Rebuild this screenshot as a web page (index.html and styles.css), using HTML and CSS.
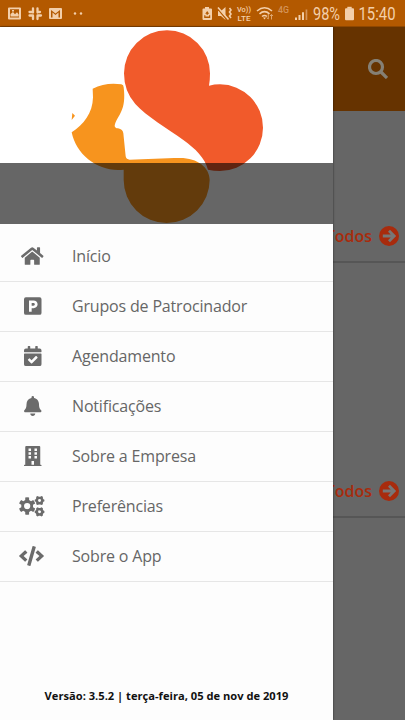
FILE: index.html
```
<!DOCTYPE html>
<html lang="pt-BR">
<head>
<meta charset="utf-8">
<title>Menu</title>
<link rel="stylesheet" href="styles.css">
</head>
<body>
<div class="app">
  <header class="status">
    <svg class="status-art" viewBox="0 0 405 27" aria-hidden="true">
      <g fill="#f3cfaa">
        <path fill-rule="evenodd" d="M9 7.500h11q1 0 1 1v10q0 1-1 1H9q-1 0-1-1v-10q0-1 1-1zM10 9.200v8.400h9V9.200zM10.500 16.500V14l2.500-2 2 2.200 2-2 1.700 2.300v2zM12 10h2v1.500h-2z"/>
        <path d="M33 8.500v4M29.500 12h3.500M37.500 8.500v4M33 16v3M37.500 15.500h3.500M37.500 16v3M29.500 15.500h3.500M37.500 12h2.500" stroke="#f3cfaa" stroke-width="2.300" stroke-linecap="round"/>
        <path fill-rule="evenodd" d="M50 8h11q1 0 1 1v9q0 1-1 1H50q-1 0-1-1V9q0-1 1-1zm1 2v7.500h1.500v-5l3 2.500 3-2.500v5H60V10l-4.500 3.600z"/>
        <circle cx="75" cy="13.500" r="1.200"/><circle cx="81" cy="13.500" r="1.200"/>
        <path fill-rule="evenodd" d="M205 7h4v1.500h2q1 0 1 1V19q0 1-1 1h-7.500q-1 0-1-1V9.500q0-1 1-1H205zm2.200 4-2 2.700h1.300v1h1.400v-1h1.300zm-3 4.200v2.800h6v-2.800h-1.200v1.300h-3.600v-1.300z"/>
        <path d="M218 11h3l4.500-4v13l-4.500-4h-3z"/>
        <rect x="345" y="8.300" width="9" height="12" rx="1"/><rect x="347.300" y="6.800" width="4.400" height="2"/>
        <path d="M295 17.500h2V20h-2zM298.500 15h2v5h-2zM302 12.300h2V20h-2z"/>
      </g>
      <path d="M217.500 8.500l10 12" stroke="#b35900" stroke-width="1.500"/>
      <path d="M218 7.500l10.500 12M229.500 8l1.500 2-1.500 2 1.500 2-1.500 2 1.500 2" fill="none" stroke="#f3cfaa" stroke-width="1.600"/>
      <g fill="none" stroke="#f3cfaa" stroke-width="1.600"><path d="M257 11q7.500-6.500 15 0M259.500 13.800q5-4.300 10 0M262 16.500q2.500-2 5 0"/></g>
      <path d="M263 17.500h3l-1.500 2z" fill="#f3cfaa"/>
      <path d="M268.300 14v5M266.800 17.500l1.500 1.700M271.500 19.500v-5M270 16l1.500-1.600 1.500 1.600" fill="none" stroke="#dda56d"/>
      <path d="M305.600 9.500h1.700V20h-1.700z" fill="#d49459"/>
      <g fill="#f3cfaa" font-family="Roboto, sans-serif">
        <text x="237" y="12.400" font-size="7.300" font-weight="500" textLength="14" lengthAdjust="spacingAndGlyphs">Vo))</text>
        <text x="237.500" y="20.500" font-size="8" font-weight="500" textLength="13" lengthAdjust="spacingAndGlyphs">LTE</text>
        <text x="278" y="13" font-size="8.500" font-weight="500" textLength="11" lengthAdjust="spacingAndGlyphs" fill="#d49459">4G</text>
        <text x="313" y="20" font-size="17.500" textLength="27" lengthAdjust="spacingAndGlyphs">98%</text>
        <text x="358.500" y="20" font-size="17.500" textLength="37" lengthAdjust="spacingAndGlyphs">15:40</text>
      </g>
    </svg>
  </header>
  <main class="page">
    <div class="toolbar">
      <svg class="search" viewBox="0 0 20 20"><circle cx="8" cy="8" r="6.500"/><path d="M13 13l6 6"/></svg>
    </div>
    <section class="section"><a class="more">Ver Todos <svg viewBox="0 0 20 20"><circle cx="10" cy="10" r="10"/><path d="M3.800 10h11M10 4.800l5.200 5.200-5.200 5.200"/></svg></a></section>
    <section class="section"><a class="more">Ver Todos <svg viewBox="0 0 20 20"><circle cx="10" cy="10" r="10"/><path d="M3.800 10h11M10 4.800l5.200 5.200-5.200 5.200"/></svg></a></section>
  </main>
  <aside class="drawer">
    <div class="cover">
      <svg class="logo" viewBox="-180 9 999 591">
        <path fill="#f15a2b" d="M192 148A129 129 0 0 1 321 19A129 129 0 0 1 450 148Q450 168 447 185Q463 181 480 181A129 130 0 0 1 609 311A129 130 0 0 1 480 441Q461 441 444 437C435 402 406 374 370 348C325 315 258 276 226 240Q192 202 192 148Z"/>
        <path fill="#f7941e" d="M98 194Q138 174 184 181Q191 182 191 190C195 223 192 245 184 262C177 278 166 292 164 305Q164 312 174 313Q189 316 190 328L197 397Q199 407 209 407C255 406 315 402 360 402C413 402 449 431 449 468A129 129 0 0 1 320 597A129 129 0 0 1 191 468V437C118 446 49 395 35 325C71 302 98 268 99 220ZM37 267L45 275L35 288Z"/>
      </svg>
      <div class="shade"></div>
    </div>
    <nav class="menu">
      <a class="item"><span class="icon"><svg viewBox="0 0 576 512"><path d="M280 148 96 300v164a16 16 0 0 0 16 16h112a16 16 0 0 0 16-16v-96a16 16 0 0 1 16-16h64a16 16 0 0 1 16 16v96a16 16 0 0 0 16 16h112a16 16 0 0 0 16-16V300L296 148a12 12 0 0 0-16 0zM572 251l-84-69V44a12 12 0 0 0-12-12h-56a12 12 0 0 0-12 12v72l-90-74a48 48 0 0 0-61 0L4 251a12 12 0 0 0-1 17l25 31a12 12 0 0 0 17 2L280 107a12 12 0 0 1 16 0l235 194a12 12 0 0 0 17-2l25-31a12 12 0 0 0-1-17z"/></svg></span><span class="label">Início</span></a>
      <a class="item"><span class="icon"><svg viewBox="0 0 448 512"><path fill-rule="evenodd" d="M48 32h352a48 48 0 0 1 48 48v352a48 48 0 0 1-48 48H48a48 48 0 0 1-48-48V80a48 48 0 0 1 48-48zm80 80v288h68v-88h48c60 0 104-43 104-100s-44-100-104-100zm68 64h44c22 0 38 14 38 36s-16 36-38 36h-44z"/></svg></span><span class="label">Grupos de Patrocinador</span></a>
      <a class="item"><span class="icon"><svg viewBox="0 0 448 512"><path d="M436 160H12a12 12 0 0 1-12-12v-36a48 48 0 0 1 48-48h48V12A12 12 0 0 1 108 0h40a12 12 0 0 1 12 12v52h128V12a12 12 0 0 1 12-12h40a12 12 0 0 1 12 12v52h48a48 48 0 0 1 48 48v36a12 12 0 0 1-12 12zM12 192h424a12 12 0 0 1 12 12v260a48 48 0 0 1-48 48H48a48 48 0 0 1-48-48V204a12 12 0 0 1 12-12zm333 96-28-29a12 12 0 0 0-17 0L194 364l-46-46a12 12 0 0 0-17 0l-28 28a12 12 0 0 0 0 17l82 83a12 12 0 0 0 17 0l143-142a12 12 0 0 0 0-16z" fill-rule="evenodd"/></svg></span><span class="label">Agendamento</span></a>
      <a class="item"><span class="icon"><svg viewBox="0 0 448 512"><path d="M224 512c35 0 64-29 64-64H160c0 35 29 64 64 64zm215-150c-19-21-55-52-55-154 0-78-54-140-128-155V32a32 32 0 1 0-64 0v21C118 68 64 130 64 208c0 102-36 133-55 154-6 6-9 14-9 22 0 16 13 32 32 32h384c19 0 32-16 32-32 0-8-3-16-9-22z"/></svg></span><span class="label">Notificações</span></a>
      <a class="item"><span class="icon"><svg viewBox="0 0 448 512"><path fill-rule="evenodd" d="M436 480h-20V24a24 24 0 0 0-24-24H56a24 24 0 0 0-24 24v456H12a12 12 0 0 0-12 12v20h448v-20a12 12 0 0 0-12-12zM116 64h64v64h-64zm152 0h64v64h-64zM116 160h64v64h-64zm152 0h64v64h-64zM116 256h64v64h-64zm152 0h64v64h-64zM192 384h64v96h-64z"/></svg></span><span class="label">Sobre a Empresa</span></a>
      <a class="item"><span class="icon wide"><svg viewBox="0 0 640 512"><path fill-rule="evenodd" d="M174 36q42-14 84 0v54l42 24 47-27q32 32 43 77l-47 27v54l47 27q-11 45-43 77l-47-27-42 24v54q-42 14-84 0v-54l-42-24-47 27q-32-32-43-77l47-27v-54l-47-27q11-45 43-77l47 27 42-24zM216 150a68 68 0 1 0 0 136 68 68 0 0 0 0-136z" transform="translate(-46 -1) scale(1.180)"/><g id="small"><path fill-rule="evenodd" d="M475 0l35 17h32l35-17 35 22-1 36 14 24 25 13v42l-25 13-14 24 1 36-35 22-35-17h-32l-35 17-35-22 1-36-14-24-25-13V95l25-13 14-24-1-36zM526 78a38 38 0 1 0 0 76 38 38 0 0 0 0-76z"/></g><use href="#small" y="290"/></svg></span><span class="label">Preferências</span></a>
      <a class="item"><span class="icon wide"><svg viewBox="0 0 640 512"><path d="M279 512l-61-18a12 12 0 0 1-8-15L346 9a12 12 0 0 1 15-8l61 17a12 12 0 0 1 8 15L294 503a12 12 0 0 1-15 9zM165 399l43-46a12 12 0 0 0 0-17l-91-80 91-80a12 12 0 0 0 0-17l-43-46a12 12 0 0 0-17 0L4 247a12 12 0 0 0 0 17l144 135a12 12 0 0 0 17 0zm327 0 144-135a12 12 0 0 0 0-17L492 112a12 12 0 0 0-17 0l-43 47a12 12 0 0 0 0 17l91 80-91 80a12 12 0 0 0 0 17l43 46a12 12 0 0 0 17 0z"/></svg></span><span class="label">Sobre o App</span></a>
    </nav>
    <footer class="version">Versão: 3.5.2 | terça-feira, 05 de nov de 2019</footer>
  </aside>
</div>
</body>
</html>
```
FILE: styles.css
```
* { box-sizing: border-box; }
body { margin: 0; font-family: "Open Sans", sans-serif; }
.app { position: relative; width: 405px; height: 720px; overflow: hidden; display: flex; flex-direction: column; background: #666; }
.status { height: 27px; background: #b35900; border-bottom: 1px solid #8f4700; }
.status-art { display: block; width: 405px; height: 27px; }
.page { flex: 1; }
.toolbar { height: 84px; background: #663300; display: flex; align-items: center; justify-content: flex-end; padding-right: 17px; }
.search { width: 20px; height: 20px; fill: none; stroke: #858075; stroke-width: 3.2; }
.section { display: flex; align-items: flex-end; justify-content: flex-end; height: 255px; padding: 0 6px 15px 0; border-bottom: 2px solid #565656; }
.section:first-of-type { height: 152px; }
.more { display: flex; align-items: center; gap: 7px; font-size: 16px; line-height: 20px; font-weight: 600; color: #a82b0d; }
.more svg { width: 20px; height: 20px; fill: #a82b0d; }
.more path { fill: none; stroke: #777; stroke-width: 2.8; }
.drawer { position: absolute; left: 0; top: 27px; width: 333px; height: 693px; display: flex; flex-direction: column; background: #fdfdfd; box-shadow: 0 0 2px rgba(0, 0, 0, .6); }
.cover { position: relative; height: 197px; background: #fff; }
.logo { display: block; width: 333px; height: 197px; }
.shade { position: absolute; left: 0; right: 0; bottom: 0; height: 61px; background: rgba(0, 0, 0, .6); }
.menu { padding-top: 8px; }
.item { display: flex; align-items: center; height: 50px; padding-bottom: 1px; border-bottom: 1px solid #e6e6e6; font-size: 16px; letter-spacing: -.17px; color: #666; }
.icon { display: flex; justify-content: center; width: 65px; margin-right: 7px; }
.icon svg { height: 20px; fill: #6b6b6b; overflow: visible; }
.icon.wide { padding-right: 2px; }
.version { margin-top: auto; padding-bottom: 16px; text-align: center; font-size: 11.15px; line-height: 17px; font-weight: 700; color: #111; }
```
